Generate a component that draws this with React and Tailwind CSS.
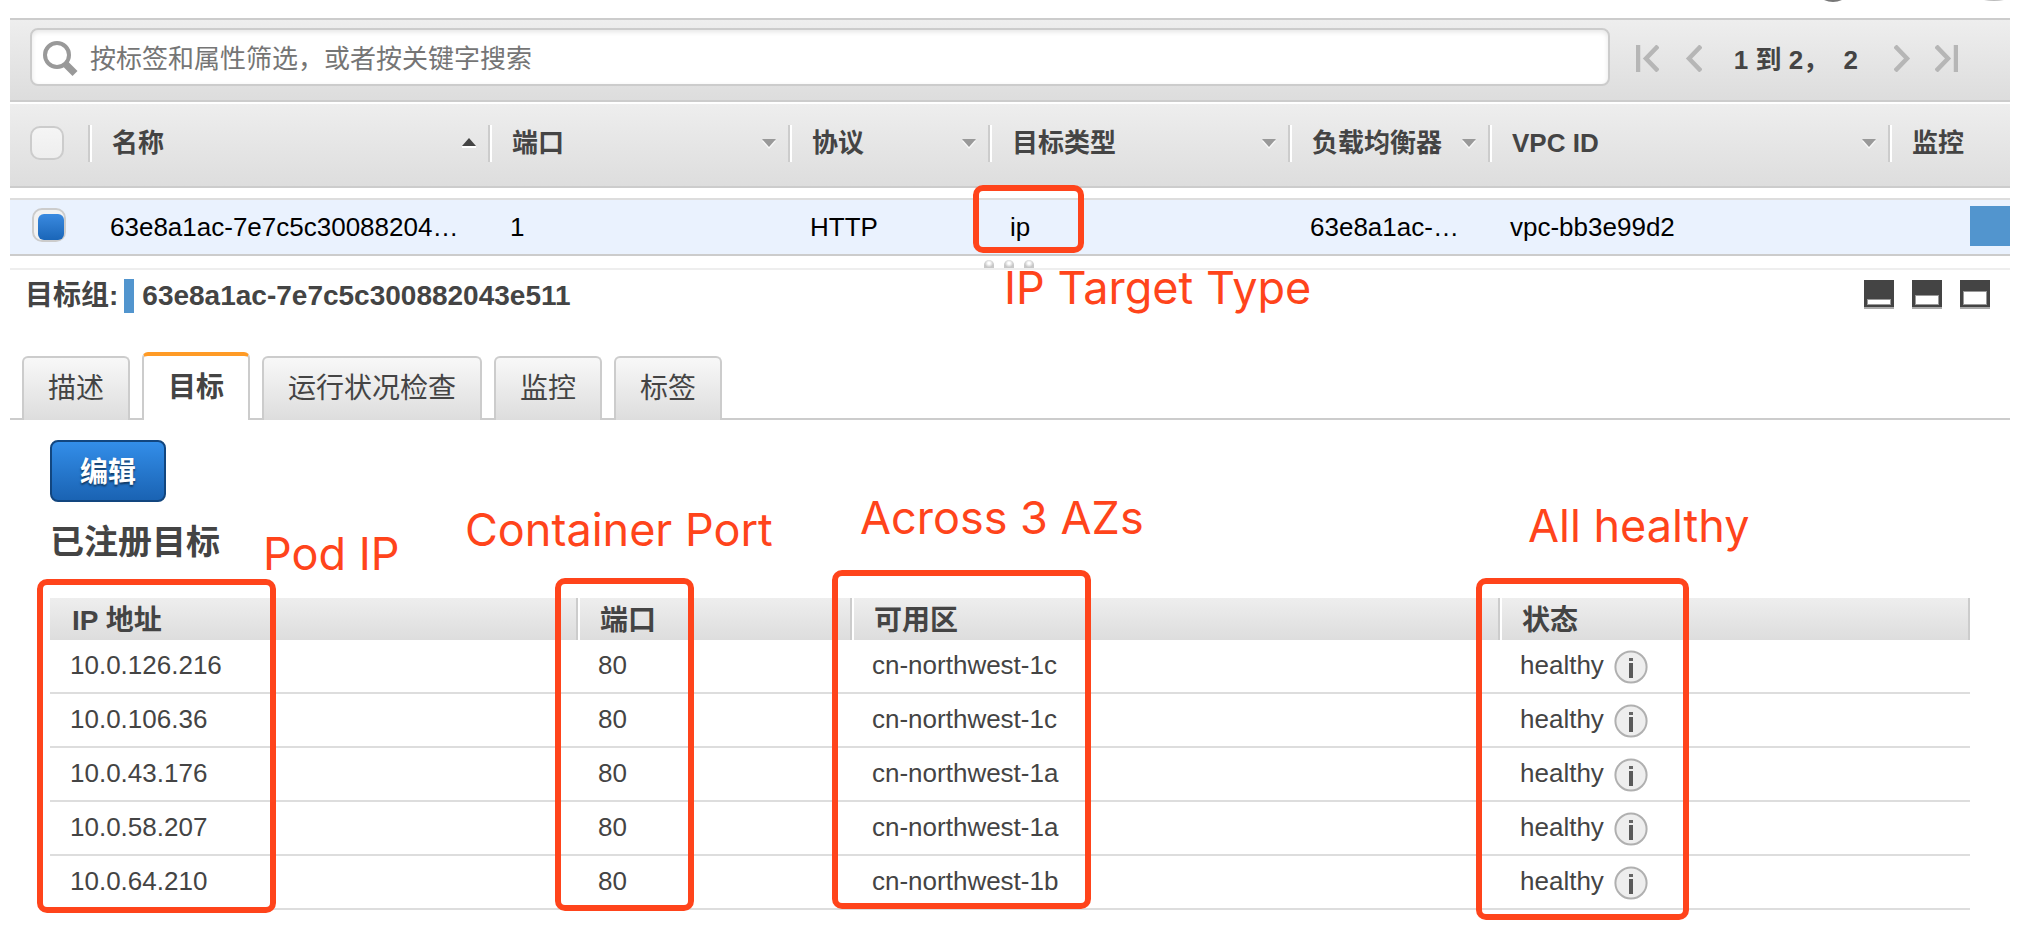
import React from "react";

const CJK = "font-['Liberation_Sans','Noto_Sans_CJK_SC',sans-serif]";
const GRADIENT = "bg-linear-to-b from-[#eeeeee] to-[#dddddd]";

const columns = [
  { label: "名称", width: "w-[400px]", arrow: "up" },
  { label: "端口", width: "w-[300px]", arrow: "down" },
  { label: "协议", width: "w-[200px]", arrow: "down" },
  { label: "目标类型", width: "w-[300px]", arrow: "down" },
  { label: "负载均衡器", width: "w-[200px]", arrow: "down" },
  { label: "VPC ID", width: "w-[400px]", arrow: "down" },
  { label: "监控", width: "", arrow: null },
];

const rowValues = [
  "63e8a1ac-7e7c5c30088204…",
  "1",
  "HTTP",
  "ip",
  "63e8a1ac-…",
  "vpc-bb3e99d2",
];

const tabs = ["描述", "目标", "运行状况检查", "监控", "标签"];

const targets = [
  ["10.0.126.216", "80", "cn-northwest-1c", "healthy"],
  ["10.0.106.36", "80", "cn-northwest-1c", "healthy"],
  ["10.0.43.176", "80", "cn-northwest-1a", "healthy"],
  ["10.0.58.207", "80", "cn-northwest-1a", "healthy"],
  ["10.0.64.210", "80", "cn-northwest-1b", "healthy"],
];

function SortArrow({ direction }) {
  return direction === "up" ? (
    <svg width="14" height="10" viewBox="0 0 14 10" className="shrink-0">
      <path d="M0 9H14" stroke="#fff" strokeWidth="2" />
      <path d="M7 0L14 8H0Z" fill="#444" />
    </svg>
  ) : (
    <svg width="14" height="10" viewBox="0 0 14 10" className="mt-[2px] shrink-0">
      <path d="M7 10L14 2H0Z" fill="#f8f8f8" />
      <path d="M7 8L14 0H0Z" fill="#999" />
    </svg>
  );
}

function PageIcon({ kind }) {
  const paths = {
    first: "M2 0V27M22 1L10 13.5L22 26",
    prev: "M16 1L4 13.5L16 26",
    next: "M1 1L13 13.5L1 26",
    last: "M1 1L13 13.5L1 26M21 0V27",
  };
  const wide = kind === "first" || kind === "last";
  const w = wide ? 23 : 17;
  return (
    <svg width={w} height="27" viewBox={`0 0 ${w} 27`} fill="none" stroke="#b6b6b6" strokeWidth="4.5">
      <path d={paths[kind]} />
    </svg>
  );
}

function PaneIcon({ top }) {
  return (
    <svg width="30" height="29" viewBox="0 0 30 29">
      <rect y="27" width="30" height="2" fill="#aaa" />
      <rect width="30" height="27" fill="#444" />
      <rect x="3.5" y={top - 0.5} width="23" height={25 - top} fill="#fff" stroke="#999" strokeWidth="1" />
    </svg>
  );
}

function InfoIcon() {
  return (
    <svg width="34" height="34" viewBox="0 0 34 34" className="block">
      <circle cx="17" cy="17" r="15.6" fill="#eee" stroke="#b0b0b0" strokeWidth="2" />
      <rect x="15" y="8" width="4" height="3" fill="#666" />
      <rect x="15" y="13" width="4" height="15" fill="#5a5a5a" />
    </svg>
  );
}

function Box({ className }) {
  return <div className={`pointer-events-none absolute rounded-[10px] border-[6px] border-[#ff441b] ${className}`} />;
}

function Note({ className, children }) {
  return (
    <p className={`pointer-events-none absolute font-['Inter',sans-serif] text-[45px] leading-[56px] whitespace-nowrap text-[#ff441b] ${className}`}>
      {children}
    </p>
  );
}

export default function App() {
  return (
    <div className={`relative overflow-hidden bg-white pr-[18px] pb-8 pl-[10px] text-[26px] leading-[34px] text-[#444] ${CJK}`}>
      <svg width="180" height="3" viewBox="0 0 180 3" className="absolute top-0 right-6">
        <path d="M0 0H18Q9 4 0 0Z" fill="#777" />
        <path d="M160 0H180Q170 2 160 0Z" fill="#bbb" />
      </svg>

      <div className={`mt-[18px] flex h-[84px] items-start border-y-2 border-[#ccc] pt-2 pr-[52px] pl-5 ${GRADIENT}`}>
        <label className="flex h-[58px] grow items-center rounded-lg border-2 border-[#ccc] bg-white pl-[10px] shadow-[inset_0_2px_5px_rgba(0,0,0,0.1)]">
          <svg width="36" height="36" viewBox="0 0 36 36" fill="none" stroke="#999" className="mt-1">
            <circle cx="15" cy="14" r="12" strokeWidth="4" />
            <path d="M23.5 23L33 32.5" strokeWidth="7" />
          </svg>
          <input
            type="text"
            aria-label="筛选"
            placeholder="按标签和属性筛选，或者按关键字搜索"
            className="h-full min-w-0 grow bg-transparent pt-1 pl-3 outline-none placeholder:text-[#757575]"
          />
        </label>
        <nav className="flex h-[61px] items-center pl-[26px] font-bold">
          <button type="button" aria-label="第一页"><PageIcon kind="first" /></button>
          <button type="button" aria-label="上一页" className="ml-[26px]"><PageIcon kind="prev" /></button>
          <span className="ml-8 pt-[2px] whitespace-pre">1 到 2，  2</span>
          <button type="button" aria-label="下一页" className="ml-9"><PageIcon kind="next" /></button>
          <button type="button" aria-label="最后一页" className="ml-6"><PageIcon kind="last" /></button>
        </nav>
      </div>

      <table className="mt-[2px] w-full table-fixed border-separate border-spacing-0">
        <thead>
          <tr className={GRADIENT}>
            <th className="h-[84px] w-[78px] border-b-2 border-[#ccc] p-0 pb-1 pl-5 text-left">
              <input type="checkbox" aria-label="全选" className="block size-[34px] appearance-none rounded-[10px] border-2 border-[#ccc] bg-linear-to-b from-[#f5f5f5] to-[#eeeeee]" />
            </th>
            {columns.map((c) => (
              <th key={c.label} className={`h-[84px] border-b-2 border-[#ccc] p-0 pb-1 ${c.width}`}>
                <div className="flex h-[37px] items-center justify-between border-l-2 border-[#ccc] pr-3 pl-[22px] whitespace-nowrap shadow-[inset_2px_0_0_#fff]">
                  {c.label}
                  {c.arrow && <SortArrow direction={c.arrow} />}
                </div>
              </th>
            ))}
          </tr>
        </thead>
        <tbody className="text-black">
          <tr aria-hidden="true"><td colSpan={8} className="h-[10px] p-0" /></tr>
          <tr className="bg-[#eaf2fe]">
            <td className="h-[58px] border-t-2 border-b-2 border-t-[#ddd] border-b-[#ccc] p-0 pb-1 pl-[22px]">
              <span className="relative block size-[34px]">
                <input type="checkbox" defaultChecked aria-label="选择目标组" className="block size-[34px] appearance-none rounded-[10px] border-2 border-[#ccc] bg-[#f2f2f2]" />
                <span className="pointer-events-none absolute right-[2px] bottom-[2px] size-[26px] rounded-md bg-linear-to-b from-[#3a8ae0] to-[#1a66b8]" />
              </span>
            </td>
            {rowValues.map((v, i) => (
              <td key={i} className="border-t-2 border-b-2 border-t-[#ddd] border-b-[#ccc] py-0 pr-6 pl-[22px] whitespace-nowrap">{v}</td>
            ))}
            <td className="border-t-2 border-b-2 border-t-[#ddd] border-b-[#ccc] p-0 pb-[2px]">
              <div className="ml-auto h-10 w-10 bg-[#5295ce]" />
            </td>
          </tr>
        </tbody>
      </table>

      <div className="flex h-[14px] items-end justify-center gap-[10px] border-b-2 border-[#eee] pr-[2px]">
        {[0, 1, 2].map((n) => (
          <span key={n} className="h-2 w-[10px] rounded-t-full bg-radial-[at_50%_40%] from-white from-15% to-[#c8c8c8] to-60%" />
        ))}
      </div>

      <section>
        <header className="flex items-start justify-between pt-2 pr-5 pl-[15px]">
          <h2 className="flex h-9 items-center text-[28px] font-bold">
            目标组:
            <span className="mr-2 ml-[6px] h-[34px] w-[10px] bg-[#5295ce]" />
            63e8a1ac-7e7c5c300882043e511
          </h2>
          <div className="flex gap-[18px] pt-[2px]">
            <button type="button" aria-label="最小化"><PaneIcon top={20} /></button>
            <button type="button" aria-label="半屏"><PaneIcon top={16} /></button>
            <button type="button" aria-label="全屏"><PaneIcon top={12} /></button>
          </div>
        </header>

        <div role="tablist" className="mt-[38px] flex items-end gap-3 pl-3 text-[28px] shadow-[inset_0_-2px_0_#ccc]">
          {tabs.map((t, i) =>
            i === 1 ? (
              <button key={t} role="tab" aria-selected="true" type="button" className="h-[68px] rounded-t-md border-x-2 border-t-4 border-x-[#ccc] border-t-[#ff9b26] bg-white px-6 font-bold">
                {t}
              </button>
            ) : (
              <button key={t} role="tab" aria-selected="false" type="button" className="h-16 rounded-t-md border-x-2 border-t-2 border-[#ccc] bg-linear-to-b from-[#f8f8f8] to-[#dddddd] px-6">
                {t}
              </button>
            )
          )}
        </div>

        <div className="pt-5 pr-10 pl-10">
          <button type="button" className="block h-[62px] rounded-lg border-2 border-[#12467f] bg-linear-to-b from-[#338ee9] to-[#1a63b3] px-7 pt-1 text-[28px] font-bold text-white text-shadow-[0_2px_2px_rgba(0,0,0,0.5)]">
            编辑
          </button>
          <h3 className="mt-4 text-[34px] leading-[48px] font-bold">已注册目标</h3>

          <table className="mt-8 w-full table-fixed border-separate border-spacing-0">
            <thead>
              <tr className={`text-left text-[28px] ${GRADIENT}`}>
                <th className="h-[42px] w-[528px] border-r-2 border-[#ccc] p-0 pt-1 pl-[22px]">IP 地址</th>
                <th className="h-[42px] w-[274px] border-r-2 border-l-2 border-r-[#ccc] border-l-white p-0 pt-1 pl-5">端口</th>
                <th className="h-[42px] w-[648px] border-r-2 border-l-2 border-r-[#ccc] border-l-white p-0 pt-1 pl-5">可用区</th>
                <th className="h-[42px] border-r-2 border-l-2 border-r-[#ccc] border-l-white p-0 pt-1 pl-5">状态</th>
              </tr>
            </thead>
            <tbody>
              {targets.map((r) => (
                <tr key={r[0]}>
                  {r.map((v, i) => (
                    <td key={i} className="h-[54px] border-b-2 border-[#ddd] p-0 pb-[2px] pl-5">
                      {i === 3 ? (
                        <span className="flex h-[34px] items-center gap-[10px]">
                          {v}
                          <button type="button" aria-label="详细信息" className="mt-1"><InfoIcon /></button>
                        </span>
                      ) : v}
                    </td>
                  ))}
                </tr>
              ))}
            </tbody>
          </table>
        </div>
      </section>

      <Box className="top-[185px] left-[973px] h-[68px] w-[111px]" />
      <Box className="top-[579px] left-[37px] h-[334px] w-[239px]" />
      <Box className="top-[578px] left-[555px] h-[333px] w-[139px]" />
      <Box className="top-[570px] left-[832px] h-[339px] w-[259px]" />
      <Box className="top-[578px] left-[1476px] h-[342px] w-[213px]" />

      <Note className="top-[260px] left-[1004px]">IP Target Type</Note>
      <Note className="top-[526px] left-[263px]">Pod IP</Note>
      <Note className="top-[502px] left-[465px]">Container Port</Note>
      <Note className="top-[490px] left-[860px]">Across 3 AZs</Note>
      <Note className="top-[498px] left-[1528px]">All healthy</Note>
    </div>
  );
}
